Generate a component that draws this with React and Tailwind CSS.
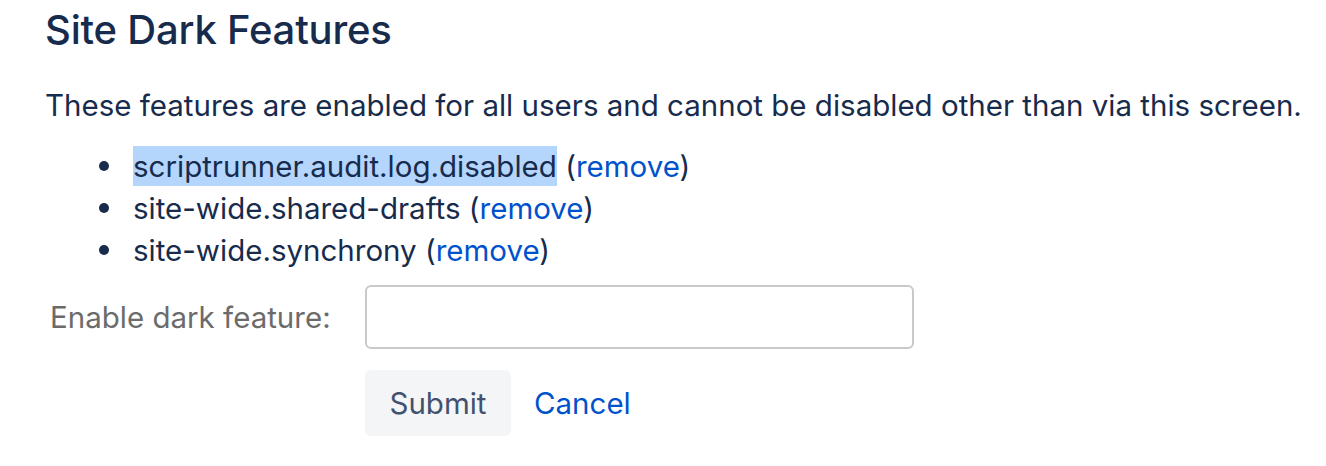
import React from 'react';

const features = [
  { name: 'scriptrunner.audit.log.disabled', selected: true },
  { name: 'site-wide.shared-drafts' },
  { name: 'site-wide.synchrony' },
];

const App = () => {
  return (
    <div className="min-h-screen w-full bg-white text-[#172b4d] font-['Inter',sans-serif] pl-[45px] pt-[6px]">
      {/* Heading */}
      <h1 className="text-[40px] font-medium leading-[48px] tracking-[-0.2px]">Site Dark Features</h1>

      {/* Description */}
      <p className="mt-[31px] text-[29.5px] leading-[40px]">
        These features are enabled for all users and cannot be disabled other than via this screen.
      </p>

      {/* Feature list */}
      <ul className="mt-[20px] pl-[54px] text-[29.5px] leading-[42px]">
        {features.map((f) => (
          <li key={f.name} className="flex items-center">
            <span className="mr-[24px] h-[10px] w-[10px] shrink-0 rounded-full bg-[#172b4d]" />
            <span>
              <span className={f.selected ? 'bg-[#b4d5fc] py-[2px]' : ''}>{f.name}</span>{' '}
              (<a href="#" className="text-[#0052cc]">remove</a>)
            </span>
          </li>
        ))}
      </ul>

      {/* Form */}
      <form className="mt-[14px] text-[29.5px]" onSubmit={(e) => e.preventDefault()}>
        <div className="flex items-center">
          <label className="w-[320px] pl-[5px] text-[#6b6b6b]">Enable dark feature:</label>
          <input
            type="text"
            className="box-border h-[64px] w-[549px] rounded-[6px] border-2 border-[#c9c9c9] bg-white px-3 outline-none"
          />
        </div>
        <div className="mt-[21px] flex items-center pl-[320px]">
          <button
            type="submit"
            className="h-[66px] w-[146px] rounded-[6px] bg-[#f4f5f7] text-[#42526e]"
          >
            Submit
          </button>
          <a href="#" className="ml-[23px] text-[#0052cc]">Cancel</a>
        </div>
      </form>
    </div>
  );
};

export default App;
